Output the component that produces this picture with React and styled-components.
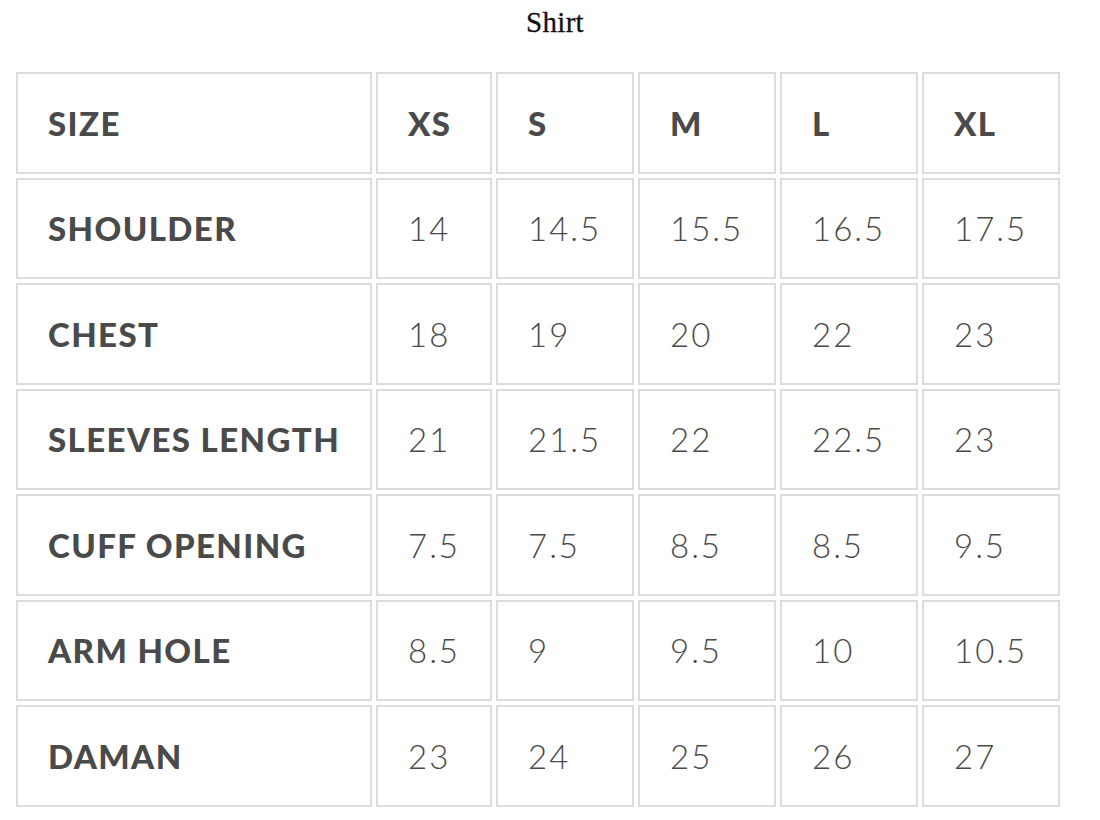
import React from "react";
import styled, { createGlobalStyle } from "styled-components";

const Global = createGlobalStyle`
  html, body { background: #ffffff; }
  body { margin: 8px; }
`;

const Title = styled.h2`
  margin: 0 0 32px;
  padding-left: 10px;
  text-align: center;
  font-family: "Liberation Serif", "DejaVu Serif", serif;
  font-weight: 400;
  font-size: 29px;
  line-height: 28px;
  letter-spacing: 0.3px;
  color: #111;
  -webkit-text-stroke: 0.3px #111;
`;

const Table = styled.table`
  margin-left: 4px;
  border-collapse: separate;
  border-spacing: 4px;
  table-layout: fixed;
`;

const Cell = styled.td`
  box-sizing: border-box;
  width: ${(p) => p.$w}px;
  height: 101.5px;
  padding: 0 0 0 30px;
  border: 2px solid #dcdcdc;
  vertical-align: middle;
  text-align: left;
  color: #4a4a4a;
  white-space: nowrap;
  font-family: "Lato", sans-serif;
  font-weight: ${(p) => (p.$head ? 900 : 300)};
  font-size: 33px;
  letter-spacing: ${(p) => (p.$head ? "1.4px" : "2px")};
`;

const widths = [356, 116, 138, 138, 138, 138];

const rows = [
  ["SIZE", "XS", "S", "M", "L", "XL"],
  ["SHOULDER", "14", "14.5", "15.5", "16.5", "17.5"],
  ["CHEST", "18", "19", "20", "22", "23"],
  ["SLEEVES LENGTH", "21", "21.5", "22", "22.5", "23"],
  ["CUFF OPENING", "7.5", "7.5", "8.5", "8.5", "9.5"],
  ["ARM HOLE", "8.5", "9", "9.5", "10", "10.5"],
  ["DAMAN", "23", "24", "25", "26", "27"],
];

export default function App() {
  return (
    <>
      <Global />
      <Title>Shirt</Title>
      <Table>
        <tbody>
          {rows.map((r, ri) => (
            <tr key={ri}>
              {r.map((c, ci) => (
                <Cell key={ci} $w={widths[ci]} $head={ri === 0 || ci === 0}>
                  {c}
                </Cell>
              ))}
            </tr>
          ))}
        </tbody>
      </Table>
    </>
  );
}
